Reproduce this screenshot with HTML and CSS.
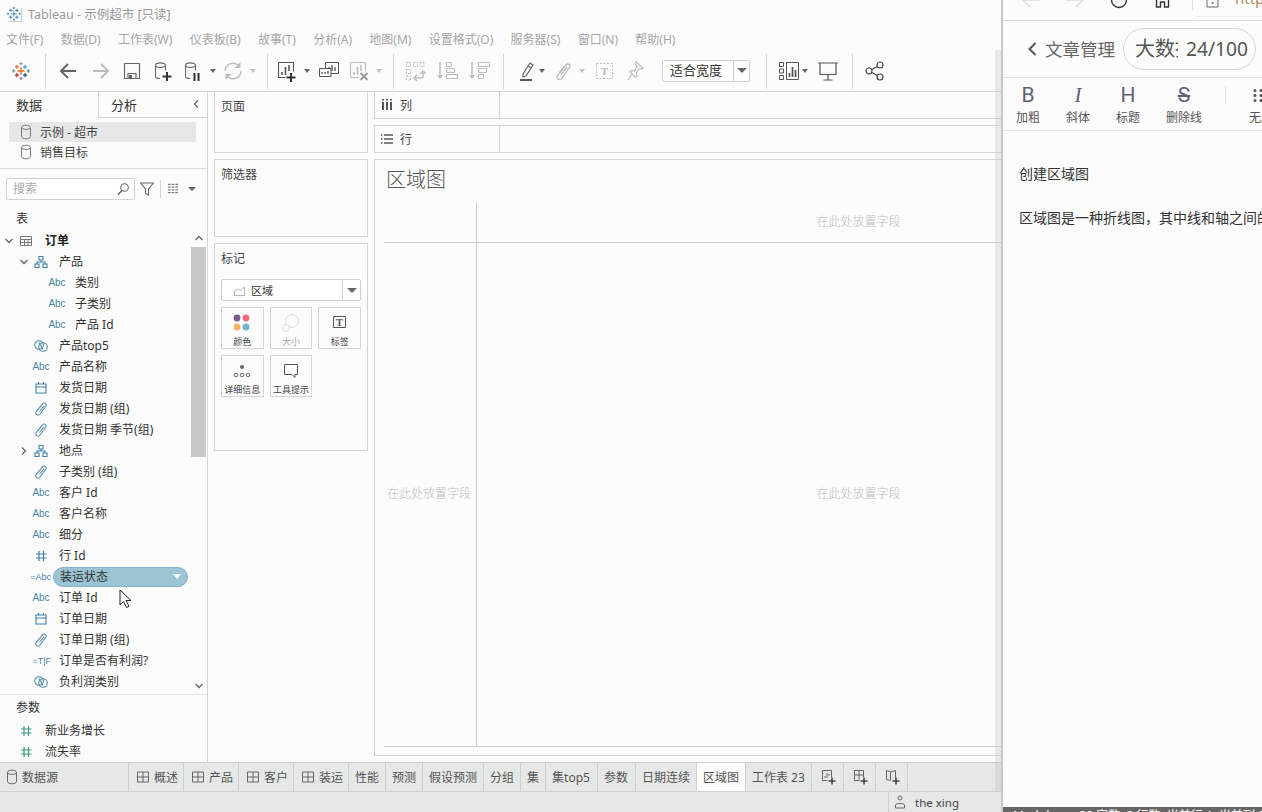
FILE: index.html
```html
<!DOCTYPE html>
<html lang="zh-CN">
<head>
<meta charset="utf-8">
<title>Tableau - 示例超市 [只读]</title>
<link rel="stylesheet" href="styles.css">
</head>
<body>
<svg class="defs" width="0" height="0" aria-hidden="true">
  <symbol id="logo" viewBox="0 0 22 22">
    <g fill="none" stroke-width="1.4">
      <path stroke="#e8762b" stroke-width="1.800" d="M11 6.500v9M6.500 11h9"/>
      <path stroke="#e8762b" d="M6 3.500v5M3.500 6h5"/>
      <path stroke="#5b9bc2" d="M16 3.500v5M13.500 6h5"/>
      <path stroke="#c72035" d="M6 13.500v5M3.500 16h5"/>
      <path stroke="#1f447e" d="M16 13.500v5M13.500 16h5"/>
      <path stroke="#7099a6" stroke-width="1.200" d="M11 0v4M9 2h4"/>
      <path stroke="#7e6e9a" stroke-width="1.200" d="M11 18v4M9 20h4"/>
      <path stroke="#5b879b" stroke-width="1.200" d="M2 9v4M0 11h4"/>
      <path stroke="#59708f" stroke-width="1.200" d="M20 9v4M18 11h4"/>
    </g>
  </symbol>
  <symbol id="logo-mono" viewBox="0 0 22 22">
    <path fill="none" stroke="#3d86b2" stroke-width="1.400" d="M10 6v8M6 10h8M5.500 2.500v5M3 5h5M14.500 2.500v5M12 5h5M5.500 12.500v5M3 15h5M14.500 12.500v5M12 15h5M10 0v3M8.500 1.500h3M10 17v3M8.500 18.500h3M1.500 8.500v3M0 10h3M18.500 8.500v3M17 10h3"/>
    <path fill="none" stroke="#aaa" d="M21.500 1v20.500H2"/>
  </symbol>
  <symbol id="back" viewBox="0 0 22 22"><path fill="none" stroke="currentColor" stroke-width="2" d="M19 11H4M11 4l-7 7 7 7"/></symbol>
  <symbol id="fwd" viewBox="0 0 22 22"><path fill="none" stroke="currentColor" stroke-width="2" d="M3 11h15M11 4l7 7-7 7"/></symbol>
  <symbol id="save" viewBox="0 0 22 22"><path fill="none" stroke="currentColor" stroke-width="1.2" d="M3.500 3.500h15v15h-15zM7 18v-4.500h8V18"/><path fill="currentColor" d="M8 15h3v3H8z"/></symbol>
  <symbol id="dbplus" viewBox="0 0 22 22"><path fill="none" stroke="currentColor" stroke-width="1.100" d="M3.500 5.500c0-3.500 10-3.500 10 0v5M3.500 5.500c0 2.500 10 2.500 10 0M3.500 5.500v11c0 1.500 2 2 4.500 2"/><path fill="none" stroke="#333" stroke-width="2" d="M15 12v9M10.500 16.500h9"/></symbol>
  <symbol id="dbpause" viewBox="0 0 22 22"><path fill="none" stroke="currentColor" stroke-width="1.100" d="M3.500 5.500c0-3.500 10-3.500 10 0v5M3.500 5.500c0 2.500 10 2.500 10 0M3.500 5.500v11c0 1.500 2 2 4.500 2"/><path fill="none" stroke="#333" stroke-width="2" d="M12.500 13v8M16.500 13v8"/></symbol>
  <symbol id="sync" viewBox="0 0 22 22"><path fill="none" stroke="currentColor" stroke-width="1.500" d="M3 11a8 8 0 0 1 14-5M19 11a8 8 0 0 1-14 5"/><path fill="currentColor" d="M18.500 2v6h-6zM3.500 20v-6h6z"/></symbol>
  <symbol id="chartplus" viewBox="0 0 22 22"><path fill="none" stroke="#555" stroke-width="1.100" d="M2.500 2.500h15v9M2.500 2.500v15h7"/><path fill="none" stroke="#555" stroke-width="1.600" d="M6 15v-3M9.500 15V7M13 11V5"/><path fill="none" stroke="#333" stroke-width="2" d="M15 13v9M10.500 17.500h9"/></symbol>
  <symbol id="dup" viewBox="0 0 22 22"><path fill="none" stroke="#555" stroke-width="1" d="M7.500 8V2.500h13v11H13M1.500 8.500h11.500v8H1.500z"/><path fill="none" stroke="#555" stroke-width="1.300" d="M11 9V7M14 11V5M17 11V7M4 14v-2M7 14v-2M10 14v-3"/></symbol>
  <symbol id="clear" viewBox="0 0 22 22"><path fill="none" stroke="currentColor" stroke-width="1.100" d="M2.500 2.500h15v9M2.500 2.500v15h8"/><path fill="none" stroke="currentColor" stroke-width="1.600" d="M6 15v-3M9.500 15V7M13 11V5"/><path fill="none" stroke="#999" stroke-width="1.800" d="M12.500 13l7 7M19.500 13l-7 7"/></symbol>
  <symbol id="group" viewBox="0 0 22 22"><path fill="none" stroke="currentColor" stroke-dasharray="2 1" d="M2.500 2.500h4v4h-4zM9.500 2.500h4v4h-4zM16 2.500h4v4h-4zM2.500 9.500h4v4h-4zM2.500 16h4v4h-4z"/><path fill="none" stroke="currentColor" stroke-width="1.500" d="M10 18h9M19 11v7M16 14l3-3 3 3M13 15l-3 3 3 3"/></symbol>
  <symbol id="sortasc" viewBox="0 0 22 22"><path fill="none" stroke="currentColor" stroke-width="1.500" d="M4 2v15"/><path fill="currentColor" d="M1 15h6l-3 4z"/><path fill="none" stroke="currentColor" d="M10.500 2.500h5v4h-5zM10.500 8.500h8v4h-8zM10.500 14.500h11v4h-11z"/></symbol>
  <symbol id="sortdesc" viewBox="0 0 22 22"><path fill="none" stroke="currentColor" stroke-width="1.500" d="M4 2v15"/><path fill="currentColor" d="M1 15h6l-3 4z"/><path fill="none" stroke="currentColor" d="M10.500 2.500h11v4h-11zM10.500 8.500h8v4h-8zM10.500 14.500h5v4h-5z"/></symbol>
  <symbol id="pen" viewBox="0 0 22 22"><path fill="none" stroke="#666" stroke-width="1.200" d="M8 14L15 3l3 2-7 11-3 1zM13 6l3 2"/><path fill="#555" d="M5 19h12v2H5z"/></symbol>
  <symbol id="clip" viewBox="0 0 22 22"><path fill="none" stroke="currentColor" stroke-width="1.300" d="M8 13l6-8c1.500-2 5-.5 3.500 2.500L10 18c-2 3-6.500 1-4.500-2.500L12 6M9 15l6-8"/></symbol>
  <symbol id="textbox" viewBox="0 0 22 22"><path fill="none" stroke="currentColor" stroke-dasharray="2 1.500" d="M2.500 3.500h16v15h-16z"/><text x="10.500" y="15" text-anchor="middle" class="svgt" fill="currentColor">T</text></symbol>
  <symbol id="pin" viewBox="0 0 22 22"><path fill="none" stroke="currentColor" stroke-width="1.200" d="M12 2l7 6-1.500 1-2-.5-3 4 .5 4-1.500 1-5.500-6 1.500-1 3 .5 2.500-5L11 3.500zM8 14l-4 6"/></symbol>
  <symbol id="showme" viewBox="0 0 22 22"><path fill="none" stroke="#555" d="M1.500 2.500h4v4h-4zM1.500 9h4v4h-4zM1.500 15.500h4v4h-4zM8.500 2.500h12v17h-12z"/><path fill="none" stroke="#555" stroke-width="1.700" d="M11.500 17v-4M14.500 17V7M17.500 17V10"/></symbol>
  <symbol id="present" viewBox="0 0 22 22"><path fill="none" stroke="#555" stroke-width="1.200" d="M1 3h20M3 3.500v11h16v-11M11 14.500V20M6.500 20h9"/></symbol>
  <symbol id="share" viewBox="0 0 22 22"><g fill="none" stroke="#444" stroke-width="1.200"><circle cx="5" cy="11" r="3"/><circle cx="16" cy="5" r="3"/><circle cx="16" cy="17" r="3"/><path d="M7.700 9.500l5.700-3M7.700 12.500l5.700 3"/></g></symbol>
  <symbol id="db" viewBox="0 0 14 16"><path fill="none" stroke="currentColor" d="M2.500 3.500c0-3 9-3 9 0v9c0 3-9 3-9 0zM2.500 3.500c0 2.500 9 2.500 9 0"/></symbol>
  <symbol id="search" viewBox="0 0 14 14"><circle cx="8.500" cy="5.500" r="3.800" fill="none" stroke="#666" stroke-width="1.100"/><path stroke="#555" stroke-width="1.500" d="M6 8.500l-4 4"/></symbol>
  <symbol id="funnel" viewBox="0 0 14 14"><path fill="none" stroke="#666" stroke-width="1.100" d="M.5 1h13L8.500 7v6l-3-1.500V7z"/></symbol>
  <symbol id="lines" viewBox="0 0 14 14"><path fill="none" stroke="#555" d="M1 2.500h12M1 5.500h12M1 8.500h12M1 11.500h12" stroke-dasharray="3 1"/></symbol>
  <symbol id="table" viewBox="0 0 14 14"><path fill="none" stroke="#777" d="M1.500 2.500h11v9h-11zM1.500 5.500h11M1.500 8.500h11M5.500 5.500v6M9 5.500v6"/></symbol>
  <symbol id="hier" viewBox="0 0 14 14"><path fill="none" stroke="#3d7ea6" stroke-width="1.100" d="M5 1.500h4v3.500H5zM1 9h4v3.500H1zM9 9h4v3.500H9zM7 5v2H3v2M7 7h4v2"/></symbol>
  <symbol id="cal" viewBox="0 0 14 14"><path fill="none" stroke="#3d7ea6" stroke-width="1.100" d="M2 3h10v9H2zM2 6h10M4.500 1v2M9.500 1v2"/></symbol>
  <symbol id="fclip" viewBox="0 0 14 14"><path fill="none" stroke="#5b96b8" stroke-width="1.100" d="M2.500 9L8.500 1.800c1.500-1.800 4.800 0 3.300 2.500L6 12c-1.700 2.300-5.500.3-3.800-2.300L7.500 3.500M5.500 9.500L10 3.800"/></symbol>
  <symbol id="venn" viewBox="0 0 14 14"><g fill="none" stroke="#4a88ac" stroke-width="1.100"><circle cx="5" cy="6" r="4.300"/><circle cx="9" cy="8" r="4.300"/><path d="M5 3.500l4 7"/></g></symbol>
  <symbol id="hash" viewBox="0 0 14 14"><path fill="none" stroke="currentColor" stroke-width="1.200" d="M5 2v10M9.500 2v10M2 5h10.500M2 9h10.500"/></symbol>
  <symbol id="down" viewBox="0 0 10 10"><path fill="none" stroke="#666" stroke-width="1.300" d="M1.500 3l3.500 3.500L8.500 3"/></symbol>
  <symbol id="right" viewBox="0 0 10 10"><path fill="none" stroke="#666" stroke-width="1.300" d="M3 1.500L6.500 5 3 8.500"/></symbol>
  <symbol id="grid4" viewBox="0 0 12 12"><path fill="none" stroke="#666" d="M.5 1h11v10H.5zM6 1v10M.5 6h11"/></symbol>
  <symbol id="newsheet" viewBox="0 0 16 16"><path fill="none" stroke="#666" d="M1.500 1.500h9v7M1.500 1.500v10h5"/><path stroke="#666" d="M4 9V7M6 9V4M8 7V5"/><path stroke="#444" stroke-width="1.600" d="M11 8.500v7M7.500 12h7"/></symbol>
  <symbol id="newdash" viewBox="0 0 16 16"><path fill="none" stroke="#666" d="M1.500 1.500h9v7M1.500 1.500v10h5M6 1.500v9M1.500 6h9"/><path stroke="#444" stroke-width="1.600" d="M11 8.500v7M7.500 12h7"/></symbol>
  <symbol id="newstory" viewBox="0 0 16 16"><path fill="none" stroke="#666" d="M1.500 1.500l4 1.500 5-1.500v7M1.500 1.500v9l4 1M5.500 3v8"/><path stroke="#444" stroke-width="1.600" d="M11 8.500v7M7.500 12h7"/></symbol>
</svg>

<div class="app">
  <header class="titlebar">
    <svg class="title-logo"><use href="#logo-mono"/></svg>
    <span class="title-text">Tableau - 示例超市 [只读]</span>
  </header>
  <nav class="menu">
    <span>文件(F)</span><span>数据(D)</span><span>工作表(W)</span><span>仪表板(B)</span><span>故事(T)</span><span>分析(A)</span><span>地图(M)</span><span>设置格式(O)</span><span>服务器(S)</span><span>窗口(N)</span><span>帮助(H)</span>
  </nav>
  <div class="toolbar">
    <svg class="ti logo"><use href="#logo"/></svg>
    <i class="sep"></i>
    <svg class="ti dark"><use href="#back"/></svg>
    <svg class="ti light"><use href="#fwd"/></svg>
    <svg class="ti dark"><use href="#save"/></svg>
    <svg class="ti dark"><use href="#dbplus"/></svg>
    <svg class="ti dark"><use href="#dbpause"/></svg>
    <i class="caret"></i>
    <svg class="ti light"><use href="#sync"/></svg>
    <i class="caret off"></i>
    <i class="sep"></i>
    <svg class="ti"><use href="#chartplus"/></svg>
    <i class="caret"></i>
    <svg class="ti"><use href="#dup"/></svg>
    <svg class="ti light"><use href="#clear"/></svg>
    <i class="caret off"></i>
    <i class="sep"></i>
    <svg class="ti light"><use href="#group"/></svg>
    <svg class="ti light"><use href="#sortasc"/></svg>
    <svg class="ti light"><use href="#sortdesc"/></svg>
    <i class="sep"></i>
    <svg class="ti"><use href="#pen"/></svg>
    <i class="caret"></i>
    <svg class="ti light"><use href="#clip"/></svg>
    <i class="caret off"></i>
    <svg class="ti light"><use href="#textbox"/></svg>
    <svg class="ti light"><use href="#pin"/></svg>
    <div class="fit"><span class="fit-text">适合宽度</span><span class="fit-arrow"><i class="caret big"></i></span></div>
    <i class="sep"></i>
    <svg class="ti"><use href="#showme"/></svg>
    <i class="caret"></i>
    <svg class="ti"><use href="#present"/></svg>
    <i class="sep"></i>
    <svg class="ti"><use href="#share"/></svg>
  </div>

  <main class="main">
    <aside class="data-pane">
      <div class="pane-tabs">
        <div class="pane-tab on">数据</div>
        <div class="pane-tab">分析<svg class="collapse"><use href="#right"/></svg></div>
      </div>
      <div class="sources">
        <div class="source hl"><svg class="db-i"><use href="#db"/></svg>示例 - 超市</div>
        <div class="source"><svg class="db-i"><use href="#db"/></svg>销售目标</div>
      </div>
      <div class="searchbar">
        <div class="searchbox"><span class="search-text">搜索</span><svg class="s-i"><use href="#search"/></svg></div>
        <svg class="f-i"><use href="#funnel"/></svg>
        <i class="s-sep"></i>
        <svg class="l-i"><use href="#lines"/></svg>
        <i class="caret"></i>
      </div>
      <div class="section">表</div>
      <div class="fields">
        <div class="rows">
          <div class="row l0"><svg class="tw"><use href="#down"/></svg><span class="fi"><svg class="f14"><use href="#table"/></svg></span><b>订单</b></div>
          <div class="row l1"><svg class="tw"><use href="#down"/></svg><span class="fi"><svg class="f14"><use href="#hier"/></svg></span>产品</div>
          <div class="row l2"><i class="tw"></i><span class="fi abc">Abc</span>类别</div>
          <div class="row l2"><i class="tw"></i><span class="fi abc">Abc</span>子类别</div>
          <div class="row l2"><i class="tw"></i><span class="fi abc">Abc</span>产品 Id</div>
          <div class="row l1"><i class="tw"></i><span class="fi"><svg class="f14"><use href="#venn"/></svg></span>产品top5</div>
          <div class="row l1"><i class="tw"></i><span class="fi abc">Abc</span>产品名称</div>
          <div class="row l1"><i class="tw"></i><span class="fi"><svg class="f14"><use href="#cal"/></svg></span>发货日期</div>
          <div class="row l1"><i class="tw"></i><span class="fi"><svg class="f14"><use href="#fclip"/></svg></span>发货日期 (组)</div>
          <div class="row l1"><i class="tw"></i><span class="fi"><svg class="f14"><use href="#fclip"/></svg></span>发货日期 季节(组)</div>
          <div class="row l1"><svg class="tw"><use href="#right"/></svg><span class="fi"><svg class="f14"><use href="#hier"/></svg></span>地点</div>
          <div class="row l1"><i class="tw"></i><span class="fi"><svg class="f14"><use href="#fclip"/></svg></span>子类别 (组)</div>
          <div class="row l1"><i class="tw"></i><span class="fi abc">Abc</span>客户 Id</div>
          <div class="row l1"><i class="tw"></i><span class="fi abc">Abc</span>客户名称</div>
          <div class="row l1"><i class="tw"></i><span class="fi abc">Abc</span>细分</div>
          <div class="row l1"><i class="tw"></i><span class="fi blue"><svg class="f14"><use href="#hash"/></svg></span>行 Id</div>
          <div class="row l1"><i class="tw"></i><span class="fi abc calc">=Abc</span><span class="pill"><span class="pill-text">装运状态</span><i class="pill-caret"></i></span></div>
          <div class="row l1"><i class="tw"></i><span class="fi abc">Abc</span>订单 Id</div>
          <div class="row l1"><i class="tw"></i><span class="fi"><svg class="f14"><use href="#cal"/></svg></span>订单日期</div>
          <div class="row l1"><i class="tw"></i><span class="fi"><svg class="f14"><use href="#fclip"/></svg></span>订单日期 (组)</div>
          <div class="row l1"><i class="tw"></i><span class="fi abc calc">=T|F</span>订单是否有利润?</div>
          <div class="row l1"><i class="tw"></i><span class="fi"><svg class="f14"><use href="#venn"/></svg></span>负利润类别</div>
        </div>
        <div class="vscroll">
          <svg class="v-arrow flip"><use href="#down"/></svg>
          <div class="v-thumb"></div>
          <svg class="v-arrow"><use href="#down"/></svg>
        </div>
      </div>
      <div class="params">
        <div class="section">参数</div>
        <div class="row l0"><i class="tw"></i><span class="fi green"><svg class="f14"><use href="#hash"/></svg></span>新业务增长</div>
        <div class="row l0"><i class="tw"></i><span class="fi green"><svg class="f14"><use href="#hash"/></svg></span>流失率</div>
      </div>
    </aside>

    <section class="cards">
      <div class="card c-pages"><div class="card-title">页面</div></div>
      <div class="card c-filters"><div class="card-title">筛选器</div></div>
      <div class="card c-marks">
        <div class="card-title">标记</div>
        <div class="mark-select">
          <svg class="ms-i" viewBox="0 0 14 14"><path fill="none" stroke="#aaa" d="M1.500 12.500v-5l4-2 3 1.500 4-4v9.500z"/></svg>
          <span class="ms-t">区域</span>
          <span class="ms-a"><i class="caret big"></i></span>
        </div>
        <div class="mark-grid">
          <div class="mark"><svg class="mk-i" viewBox="0 0 20 20"><circle cx="5" cy="5" r="3.400" fill="#7b5a8e"/><circle cx="14" cy="5" r="3.400" fill="#ee6b7b"/><circle cx="5" cy="14" r="3.400" fill="#f2b36a"/><circle cx="14" cy="14" r="3.400" fill="#74b3ce"/></svg>颜色</div>
          <div class="mark off"><svg class="mk-i" viewBox="0 0 20 20"><circle cx="11" cy="8" r="6.500" fill="none" stroke="#ddd"/><circle cx="5" cy="15" r="3.500" fill="#fcfcfc" stroke="#ddd"/></svg>大小</div>
          <div class="mark"><svg class="mk-i" viewBox="0 0 20 20"><path fill="none" stroke="#555" d="M3.500 3.500h12v11h-12z"/><text x="9.500" y="12.500" text-anchor="middle" class="svgt" fill="#555">T</text></svg>标签</div>
          <div class="mark"><svg class="mk-i" viewBox="0 0 20 20"><circle cx="10" cy="6" r="2" fill="#666"/><g fill="none" stroke="#666"><circle cx="4" cy="14" r="1.800"/><circle cx="10" cy="14" r="1.800"/><circle cx="16" cy="14" r="1.800"/></g></svg>详细信息</div>
          <div class="mark"><svg class="mk-i" viewBox="0 0 20 20"><path fill="none" stroke="#555" d="M3.500 3.500h13v10h-2.500v3l-3-3h-7.500z"/></svg>工具提示</div>
        </div>
      </div>
    </section>

    <section class="work">
      <div class="shelf"><div class="shelf-label"><svg class="shelf-i" viewBox="0 0 12 12"><path stroke="#555" stroke-width="2" d="M2 3v8M6 3v8M10 3v8"/><path fill="#555" d="M1 0h2v1.500H1zM5 0h2v1.500H5zM9 0h2v1.500H9z"/></svg><span class="shelf-text">列</span></div></div>
      <div class="shelf"><div class="shelf-label"><svg class="shelf-i" viewBox="0 0 12 12"><path stroke="#555" stroke-width="1.500" d="M3 2h9M3 6h9M3 10h9M0 2h1.500M0 6h1.500M0 10h1.500"/></svg><span class="shelf-text">行</span></div></div>
      <div class="canvas">
        <div class="viz-title">区域图</div>
        <div class="viz">
          <div class="viz-corner"></div>
          <div class="viz-top drop">在此处放置字段</div>
          <div class="viz-left drop">在此处放置字段</div>
          <div class="viz-body drop">在此处放置字段</div>
        </div>
      </div>
    </section>
  </main>

  <div class="tabs">
    <div class="tab src"><svg class="tab-db"><use href="#db"/></svg>数据源</div>
    <div class="tab ic"><svg class="g4"><use href="#grid4"/></svg>概述</div>
    <div class="tab ic"><svg class="g4"><use href="#grid4"/></svg>产品</div>
    <div class="tab ic"><svg class="g4"><use href="#grid4"/></svg>客户</div>
    <div class="tab ic"><svg class="g4"><use href="#grid4"/></svg>装运</div>
    <div class="tab">性能</div>
    <div class="tab">预测</div>
    <div class="tab">假设预测</div>
    <div class="tab">分组</div>
    <div class="tab">集</div>
    <div class="tab roomy">集top5</div>
    <div class="tab roomy">参数</div>
    <div class="tab">日期连续</div>
    <div class="tab on">区域图</div>
    <div class="tab">工作表 23</div>
    <div class="tab add"><svg class="add-i"><use href="#newsheet"/></svg></div>
    <div class="tab add"><svg class="add-i"><use href="#newdash"/></svg></div>
    <div class="tab add"><svg class="add-i"><use href="#newstory"/></svg></div>
  </div>
  <footer class="status">
    <div class="user">
      <svg class="user-i" viewBox="0 0 12 14"><path fill="none" stroke="#666" d="M4 3a2 2 0 1 1 4 0 2 2 0 1 1-4 0M1.500 13v-3c0-2 9-2 9 0v3z"/></svg>
      <span>the xing</span>
    </div>
  </footer>
</div>

<div class="strip"></div>

<aside class="window">
  <div class="w-nav">
    <svg class="wn a1" viewBox="0 0 18 20"><path fill="none" stroke="#ddd" stroke-width="1.500" d="M18 0H2M8-6L1 0l7 7"/></svg>
    <svg class="wn a2" viewBox="0 0 18 20"><path fill="none" stroke="#ddd" stroke-width="1.500" d="M0 0h16M10-6l7 6-7 7"/></svg>
    <svg class="wn a3" viewBox="0 0 18 20"><circle cx="9" cy="0" r="7.500" fill="none" stroke="#333" stroke-width="1.400"/></svg>
    <svg class="wn a4" viewBox="0 0 18 20"><path fill="none" stroke="#333" stroke-width="1.400" d="M2.500 0v7h4V2h4v5h4V0"/></svg>
    <i class="wn-sep"></i>
    <i class="wn-addr"></i>
    <svg class="wn a5" viewBox="0 0 18 20"><path fill="none" stroke="#666" d="M3 0v7h11V0"/><circle cx="8.500" cy="3" r="1" fill="#666"/></svg>
    <span class="http">http</span>
  </div>
  <div class="w-head">
    <svg class="w-back" viewBox="0 0 12 16"><path fill="none" stroke="#555" stroke-width="2" d="M9.500 2l-6 6 6 6"/></svg>
    <span class="w-crumb">文章管理</span>
    <div class="w-pill"><span class="w-input">大数据</span><span class="w-count">24/100</span></div>
  </div>
  <div class="w-tools">
    <div class="tool"><span class="g">B</span>加粗</div>
    <div class="tool"><span class="g it">I</span>斜体</div>
    <div class="tool"><span class="g">H</span>标题</div>
    <div class="tool wide"><span class="g st">S</span>删除线</div>
    <i class="tool-sep"></i>
    <div class="tool last"><svg class="t-dots" viewBox="0 0 16 16"><g fill="#555"><circle cx="2" cy="3" r="1.500"/><circle cx="8" cy="3" r="1.500"/><circle cx="2" cy="8" r="1.500"/><circle cx="8" cy="8" r="1.500"/><circle cx="2" cy="13" r="1.500"/><circle cx="8" cy="13" r="1.500"/></g></svg>无序列表</div>
  </div>
  <div class="w-body">
    <p>创建区域图</p>
    <p>区域图是一种折线图，其中线和轴之间的区域用颜色填充</p>
  </div>
  <div class="w-status">Markdown&nbsp; 38 字数&nbsp; 2 行数&nbsp; 当前行 1, 当前列 0</div>
</aside>

<svg class="pointer" viewBox="0 0 14 20" aria-hidden="true"><path fill="#fff" stroke="#222" d="M1 1v15l3.500-3.500 3 6 2.500-1.200-3-5.800h5z"/></svg>
</body>
</html>
```
FILE: styles.css
```css
* { box-sizing: border-box; }
html, body { margin: 0; height: 100%; }
body {
  width: 1262px;
  height: 812px;
  overflow: hidden;
  position: relative;
  background: #fcfcfc;
  color: #333;
  font: 12px/1.2 "Noto Sans", "Noto Sans CJK SC", sans-serif;
}
i { display: block; font-style: normal; }
b { font-weight: 700; color: #222; }
.defs { position: absolute; }
.svgt { font: 700 11px "Liberation Serif", serif; }

.app { width: 1262px; height: 812px; display: flex; flex-direction: column; }

/* title + menu */
.titlebar { height: 28px; padding: 4px 0 4px 7px; display: flex; align-items: center; gap: 6px; flex: none; }
.title-logo { width: 15px; height: 15px; }
.title-text { font-size: 12.500px; color: #999; }
.menu { height: 24px; flex: none; display: flex; align-items: center; padding-left: 6px; gap: 17.300px; color: #a6a6a6; font-size: 12px; }

/* toolbar: tracks are the distances between the left edges of its icons */
.toolbar {
  height: 35px; margin: 2px 0; flex: none; padding-left: 10px;
  display: grid; align-items: center; justify-items: start;
  grid-template-columns: 35px 12px 33px 31px 31px 30px 28px 12px 28px 17px 9px 28px 14px 30px 28px 17px 11px 32px 32px 35px 12px 24px 13px 27px 15px 30px 38px 104px 12px 24px 15px 35px 12px auto;
}
.ti { width: 22px; height: 22px; margin-top: -2px; }
.ti.logo { width: 18px; height: 18px; margin-left: 2px; }
.dark { color: #666; }
.light { color: #bdbdbd; }
.sep { width: 1px; height: 35px; background: #d6d6d6; }
.caret { width: 0; height: 0; border: 3.500px solid transparent; border-top: 4px solid #666; border-bottom: 0; margin-top: -2px; }
.caret.off { border-top-color: #c4c4c4; }
.caret.big { border-width: 5px 5px 0; margin-top: 0; }
.fit { width: 88px; height: 22px; margin-top: -2px; border: 1px solid #d0d0d0; border-radius: 2px; display: flex; align-items: center; background: #fff; }
.fit-text { width: 70px; padding-left: 7px; font-size: 13px; color: #333; white-space: nowrap; }
.fit-arrow { flex: 1; height: 100%; border-left: 1px solid #d0d0d0; display: flex; align-items: center; justify-content: center; }

/* main */
.main { flex: 1; min-height: 0; display: flex; border-top: 1px solid #d4d4d4; overflow: hidden; }

.data-pane { width: 208px; flex: none; border-right: 1px solid #d4d4d4; display: flex; flex-direction: column; }
.pane-tabs { display: flex; height: 26px; flex: none; }
.pane-tab { flex: 1; padding: 6px 0 0 12px; font-size: 13px; position: relative; border-left: 1px solid #d4d4d4; border-bottom: 1px solid #d4d4d4; color: #333; }
.pane-tab.on { flex: 0 0 98px; border: 0; padding-left: 16px; }
.collapse { position: absolute; right: 6px; top: 7px; width: 10px; height: 10px; transform: scaleX(-1); }
.sources { padding: 4px 11px 6px 9px; height: 51px; border-bottom: 1px solid #dedede; flex: none; }
.source { height: 20px; display: flex; align-items: center; padding: 2px 0 0 10px; gap: 7px; color: #444; }
.source.hl { background: #e6e7e7; }
.db-i { width: 14px; height: 16px; color: #777; flex: none; margin-top: -2px; }
.searchbar { height: 21px; margin-top: 9px; display: flex; align-items: center; padding-left: 6px; flex: none; }
.searchbox { width: 129px; height: 22px; border: 1px solid #d0d0d0; border-radius: 2px; display: flex; align-items: center; justify-content: space-between; padding: 0 4px 0 6px; color: #aaa; background: #fff; }
.search-text { padding-top: 2px; }
.s-i { width: 14px; height: 14px; }
.f-i { width: 14px; height: 14px; margin-left: 5px; }
.s-sep { width: 1px; height: 18px; background: #d4d4d4; margin: 0 6px 0 6px; }
.l-i { width: 13px; height: 13px; }
.searchbar .caret { margin: 0 0 0 8px; border-width: 4px 4px 0; }
.section { height: 21px; padding: 0 0 0 16px; line-height: 23px; margin-top: 8px; color: #333; flex: none; font-size: 12px; }
.fields { display: flex; flex: none; height: 465px; margin-top: 2px; border-bottom: 1px solid #e4e4e4; }
.rows { flex: 1; min-width: 0; }
/* the 2px top padding drops the text to where the reference has it; icons take it back */
.row { height: 21px; padding-top: 2px; display: flex; align-items: center; white-space: nowrap; color: #333; }
.tw { width: 14px; height: 10px; flex: none; padding: 0 2px; margin-top: -2px; }
.fi { width: 20px; margin: -2px 8px 0 0; flex: none; display: flex; justify-content: center; align-items: center; }
.f14 { width: 14px; height: 14px; }
.l0 { padding-left: 2px; }
.l0 .fi { margin-right: 9px; }
.l1 { padding-left: 17px; }
.l2 { padding-left: 33px; }
.abc { font: 10px "Liberation Sans", sans-serif; color: #4a84a5; }
.calc { font-size: 9px; justify-content: flex-end; white-space: nowrap; }
.blue { color: #3d7ea6; }
.green { color: #3f9a7f; }
.pill {
  width: 135px; height: 20px; margin: -2px 0 0 -6px; padding: 0 6px;
  display: flex; align-items: center; justify-content: space-between;
  background: #9bc4d5; border: 1px solid #86b5cb; border-radius: 10px; color: #333;
}
.pill-text { padding-top: 2px; }
.pill-caret { width: 0; height: 0; border: 4.500px solid transparent; border-top: 5px solid #fff; border-bottom: 0; }
.vscroll { width: 16px; flex: none; display: flex; flex-direction: column; align-items: center; justify-content: space-between; padding-right: 1px; }
.v-arrow { width: 10px; height: 10px; flex: none; }
.v-arrow.flip { transform: scaleY(-1); margin-top: 3px; }
.v-thumb { width: 15px; height: 210px; background: #c8c8c8; margin: 4px 0 auto; }
.v-arrow:last-child { margin-bottom: 3px; }
.params .section { margin-top: 2px; height: 23px; line-height: 22px; }

/* cards */
.cards { width: 166px; flex: none; padding: 0 6px; display: flex; flex-direction: column; gap: 6px; }
.card { border: 1px solid #d4d4d4; padding: 8px 6px 0; flex: none; }
.card-title { color: #444; }
.c-pages { height: 62px; margin-top: -1px; }
.c-filters { height: 78px; }
.c-marks { height: 208px; }
.mark-select { height: 22px; margin-top: 13px; border: 1px solid #d0d0d0; border-radius: 2px; display: flex; align-items: center; background: #fff; font-size: 11px; }
.ms-i { width: 13px; height: 13px; margin-left: 11px; }
.ms-t { margin-left: 5px; flex: 1; }
.ms-a { width: 18px; height: 100%; border-left: 1px solid #d0d0d0; display: flex; align-items: center; justify-content: center; }
.mark-grid { display: grid; grid-template-columns: repeat(3, 1fr); grid-auto-rows: 42px; gap: 6px; margin-top: 6px; }
.mark { border: 1px solid #d4d4d4; display: flex; flex-direction: column; align-items: center; font-size: 9px; color: #444; padding-top: 5px; gap: 4px; white-space: nowrap; }
.mark.off { color: #aaa; }
.mk-i { width: 20px; height: 20px; flex: none; }

/* shelves + canvas */
.work { flex: 1; min-width: 0; display: flex; flex-direction: column; gap: 6px; }
.shelf { height: 28px; flex: none; border: 1px solid #d4d4d4; border-right: 0; margin-top: -1px; }
.shelf + .shelf { margin-top: 0; }
.shelf-label { width: 125px; height: 100%; border-right: 1px solid #d4d4d4; display: flex; align-items: center; padding-left: 6px; gap: 7px; color: #444; }
.shelf-text { padding-top: 2px; }
.shelf-i { width: 12px; height: 12px; }
.canvas { height: 597px; flex: none; border: 1px solid #d4d4d4; border-right: 0; padding: 0 22px 8px 9px; display: flex; flex-direction: column; }
.viz-title { height: 42px; padding: 8px 0 0 2px; font-size: 20px; font-weight: 300; color: #555; flex: none; }
.viz { flex: 1; display: grid; grid-template-columns: 93px 1fr; grid-template-rows: 41px 1fr; border-bottom: 1px solid #ccc; }
.viz-corner { border-right: 1px solid #ccc; border-bottom: 1px solid #ccc; }
.viz-top { border-bottom: 1px solid #ccc; }
.viz-left { border-right: 1px solid #ccc; padding-right: 2px; }
.drop { display: flex; align-items: center; justify-content: center; font-size: 12px; font-weight: 300; color: #bcbcbc; }

/* sheet tabs */
.tabs { height: 30px; flex: none; display: flex; background: #e6e7e7; border-top: 1px solid #d0d0d0; border-bottom: 1px solid #d0d0d0; }
.tab { flex: none; padding: 2px 6px 0; display: flex; align-items: center; color: #555; border-right: 1px solid #cfcfcf; white-space: nowrap; }
.tab.roomy { padding-right: 7px; }
.tab.on { background: #fcfcfc; }
.src { width: 129px; padding-left: 5px; gap: 3px; }
.tab-db { width: 14px; height: 16px; color: #666; margin-top: -2px; }
.ic { padding: 2px 6px 0 8px; gap: 5px; width: 55px; }
.g4 { width: 12px; height: 12px; flex: none; margin-top: -2px; }
.add { width: 32px; padding: 0 0 0 9px; }
.add-i { width: 16px; height: 16px; }
.status { height: 20px; flex: none; background: #e6e7e7; display: flex; padding-left: 888px; }
.user { height: 100%; border-left: 1px solid #d0d0d0; padding: 2px 0 0 5px; display: flex; align-items: center; gap: 9px; color: #444; font-size: 11.500px; }
.user-i { width: 12px; height: 14px; margin-top: -2px; }

/* overlapping browser window */
.strip { position: absolute; left: 995px; top: 50px; width: 6px; height: 742px; background: rgba(190, 192, 192, .32); }
.window {
  position: absolute; left: 1001px; top: 0; width: 261px; height: 812px;
  background: #fcfcfc; border-left: 2px solid #c8c8c8;
  display: flex; flex-direction: column; overflow: hidden;
}
.w-nav { height: 21px; flex: none; border-bottom: 1px solid #d8d8d8; display: flex; position: relative; overflow: hidden; }
.wn { position: absolute; top: 0; width: 18px; height: 20px; }
.a1 { left: 19px; }
.a2 { left: 63px; }
.a3 { left: 107px; }
.a4 { left: 151px; }
.a5 { left: 201px; }
.wn-sep { position: absolute; left: 189px; top: 0; width: 1px; height: 10px; background: #e2e2e2; }
.wn-addr { position: absolute; left: 193px; top: 16px; right: 0; height: 1px; background: #eee; }
.http { position: absolute; left: 232px; top: -11px; font-size: 15px; color: #b58a63; }
.w-head { height: 57px; flex: none; display: flex; align-items: center; border-bottom: 1px solid #e2e2e2; padding-left: 23px; }
.w-back { width: 12px; height: 16px; flex: none; }
.w-crumb { margin-left: 7px; font-size: 17.500px; color: #666; white-space: nowrap; }
.w-pill { margin-left: 8px; width: 133px; height: 42px; flex: none; border: 1px solid #d6d6d6; border-radius: 21px; display: flex; align-items: center; padding-left: 11px; font-size: 20px; color: #555; }
.w-input { width: 43px; overflow: hidden; white-space: nowrap; flex: none; }
.w-count { margin-left: 8px; font-size: 19.200px; white-space: nowrap; }
.w-tools { height: 53px; flex: none; display: flex; align-items: center; border-bottom: 1px solid #e6e6e6; }
.tool { width: 50px; flex: none; display: flex; flex-direction: column; align-items: center; color: #555; font-size: 12px; white-space: nowrap; }
.tool.wide { width: 62px; }
.tool.last { width: 48px; margin-left: 23px; align-items: flex-start; }
.tool-sep { width: 1px; height: 18px; background: #e2e2e2; margin: -18px 0 0 10px; flex: none; }
.g { font: 400 21px/25px Roboto, sans-serif; color: #5c6178; height: 28px; }
.g.it { font-family: "Liberation Serif", serif; font-style: italic; }
.g.st { text-decoration: line-through; }
.t-dots { width: 16px; height: 28px; padding: 4px 0 7px; margin-left: 4px; }
.w-body { flex: 1; padding: 33px 0 0 16px; font-size: 14px; color: #333; white-space: nowrap; overflow: hidden; }
.w-body p { margin: 0 0 24px; height: 20px; line-height: 20px; }
.w-status { height: 5px; flex: none; background: #666; color: #fff; font-size: 12px; line-height: 17px; padding-left: 10px; overflow: hidden; white-space: nowrap; }

.pointer { position: absolute; left: 119px; top: 589px; width: 14px; height: 20px; }
```
